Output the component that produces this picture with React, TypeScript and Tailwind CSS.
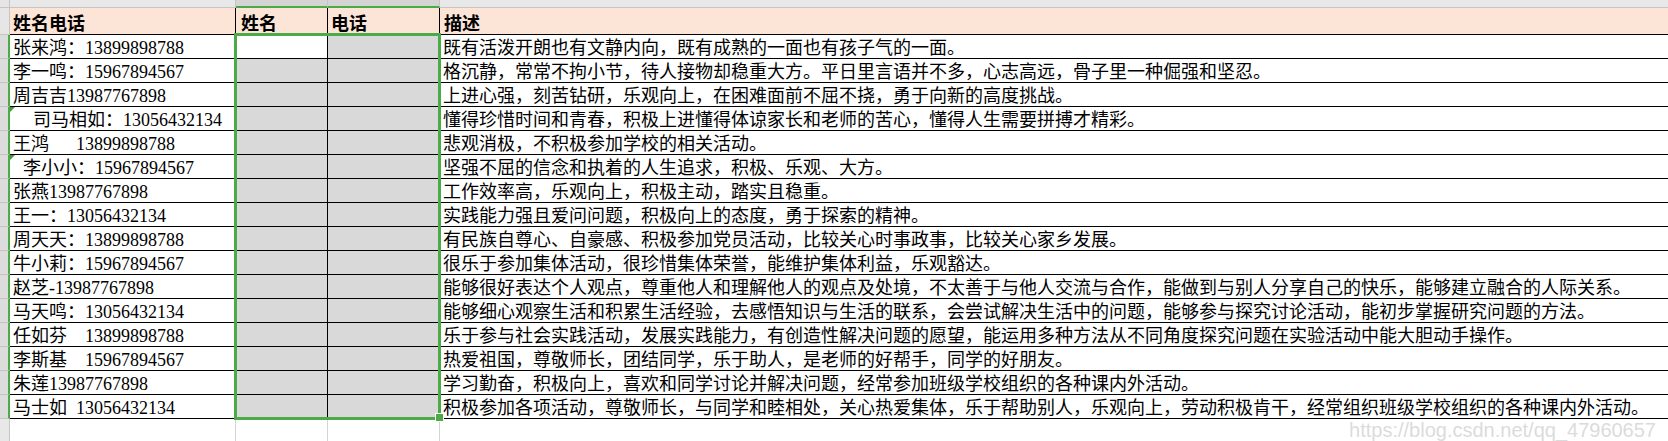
const people = [
  { name: "张来鸿：13899898788", indent: 0 },
  { name: "李一鸣：15967894567", indent: 0 },
  { name: "周吉吉13987767898", indent: 0 },
  { name: "司马相如：13056432134", indent: 20, flag: true },
  { name: "王鸿\u3000  13899898788", indent: 0 },
  { name: "李小小：15967894567", indent: 10, flag: true },
  { name: "张燕13987767898", indent: 0 },
  { name: "王一：13056432134", indent: 0 },
  { name: "周天天：13899898788", indent: 0 },
  { name: "牛小莉：15967894567", indent: 0 },
  { name: "赵芝-13987767898", indent: 0 },
  { name: "马天鸣：13056432134", indent: 0 },
  { name: "任如芬\u300013899898788", indent: 0 },
  { name: "李斯基\u300015967894567", indent: 0 },
  { name: "朱莲13987767898", indent: 0 },
  { name: "马士如  13056432134", indent: 0 },
];

const notes = [
  "既有活泼开朗也有文静内向，既有成熟的一面也有孩子气的一面。",
  "格沉静，常常不拘小节，待人接物却稳重大方。平日里言语并不多，心志高远，骨子里一种倔强和坚忍。",
  "上进心强，刻苦钻研，乐观向上，在困难面前不屈不挠，勇于向新的高度挑战。",
  "懂得珍惜时间和青春，积极上进懂得体谅家长和老师的苦心，懂得人生需要拼搏才精彩。",
  "悲观消极，不积极参加学校的相关活动。",
  "坚强不屈的信念和执着的人生追求，积极、乐观、大方。",
  "工作效率高，乐观向上，积极主动，踏实且稳重。",
  "实践能力强且爱问问题，积极向上的态度，勇于探索的精神。",
  "有民族自尊心、自豪感、积极参加党员活动，比较关心时事政事，比较关心家乡发展。",
  "很乐于参加集体活动，很珍惜集体荣誉，能维护集体利益，乐观豁达。",
  "能够很好表达个人观点，尊重他人和理解他人的观点及处境，不太善于与他人交流与合作，能做到与别人分享自己的快乐，能够建立融合的人际关系。",
  "能够细心观察生活和积累生活经验，去感悟知识与生活的联系，会尝试解决生活中的问题，能够参与探究讨论活动，能初步掌握研究问题的方法。",
  "乐于参与社会实践活动，发展实践能力，有创造性解决问题的愿望，能运用多种方法从不同角度探究问题在实验活动中能大胆动手操作。",
  "热爱祖国，尊敬师长，团结同学，乐于助人，是老师的好帮手，同学的好朋友。",
  "学习勤奋，积极向上，喜欢和同学讨论并解决问题，经常参加班级学校组织的各种课内外活动。",
  "积极参加各项活动，尊敬师长，与同学和睦相处，关心热爱集体，乐于帮助别人，乐观向上，劳动积极肯干，经常组织班级学校组织的各种课内外活动。",
];

export default function App() {
  return (
    <div className="relative w-[1668px] h-[441px] overflow-hidden bg-white flex flex-col font-['Liberation_Serif','Noto_Sans_CJK_SC',serif] text-[18px] text-black">
      {/* column letters bar */}
      <div className="flex h-[8px] shrink-0">
        <div className="w-[10px] bg-[#e6e6e6] border-r border-b border-[#c4c4c4]" />
        <div className="w-[226px] bg-[#e8e8e8] border-r border-b border-[#c4c4c4]" />
        <div className="w-[92px] bg-[#d4d4d4] border-r border-[#c4c4c4] border-b-2 border-b-[#4caa48]" />
        <div className="w-[112px] bg-[#d4d4d4] border-r border-[#c4c4c4] border-b-2 border-b-[#4caa48]" />
        <div className="flex-1 bg-[#e8e8e8] border-b border-[#c4c4c4]" />
      </div>

      {/* header row */}
      <div className="flex h-[27px] shrink-0 font-['Noto_Sans_CJK_SC',sans-serif] font-bold leading-none">
        <div className="w-[10px] bg-[#e6e6e6] border-r border-b border-[#c4c4c4]" />
        <div className="w-[226px] bg-[#fce4d6] border-r border-b border-black flex items-center pl-[3px] pt-[1px]">姓名电话</div>
        <div className="w-[92px] bg-[#fce4d6] border-r border-b border-black flex items-center pl-[5px] pt-[1px]">姓名</div>
        <div className="w-[112px] bg-[#fce4d6] border-r border-b border-black flex items-center pl-[3px] pt-[1px]">电话</div>
        <div className="flex-1 bg-[#fce4d6] border-b border-black flex items-center pl-[4px] pt-[1px]">描述</div>
      </div>

      {/* data rows */}
      {people.map((p, i) => (
        <div key={i} className="flex h-[24px] shrink-0 leading-none">
          <div className="w-[10px] bg-[#dcdcdc] border-b border-[#c4c4c4] border-r-2 border-r-[#4caa48]" />
          <div
            className="relative w-[226px] border-r border-b border-black flex items-center whitespace-pre overflow-hidden pl-[3px] pt-[2px]"
            style={{ paddingLeft: 3 + p.indent }}
          >
            {p.flag && (
              <span className="absolute left-0 top-0 w-0 h-0 border-t-[5px] border-r-[5px] border-t-[#3f9a3a] border-r-transparent" />
            )}
            {p.name}
          </div>
          <div className={`w-[92px] border-r border-b border-black ${i === 0 ? "bg-white" : "bg-[#d9d9d9]"}`} />
          <div className="w-[112px] bg-[#d9d9d9] border-r border-b border-black" />
          <div className="flex-1 border-b border-black flex items-center whitespace-pre overflow-hidden pl-[3px] pt-[2px]">
            {notes[i]}
          </div>
        </div>
      ))}

      {/* empty rows below */}
      <div className="flex flex-1">
        <div className="w-[10px] bg-[#e8e8e8] border-r border-[#c4c4c4]" />
        <div className="w-[226px] border-r border-[#d4d4d4]" />
        <div className="w-[92px] border-r border-[#d4d4d4]" />
        <div className="w-[112px] border-r border-[#d4d4d4]" />
        <div className="flex-1" />
      </div>

      {/* selection frame */}
      <div className="absolute left-[234px] top-[33px] w-[207px] h-[387px] border-[3px] border-[#4caa48] pointer-events-none" />
      <div className="absolute left-[435px] top-[413px] w-[9px] h-[9px] bg-[#4caa48] border border-white" />

      {/* watermark */}
      <div className="absolute right-[12px] bottom-[1px] font-['Liberation_Sans',sans-serif] text-[20px] leading-none text-[#d2d2d2]/80 pointer-events-none">
        https://blog.csdn.net/qq_47960657
      </div>
    </div>
  );
}
